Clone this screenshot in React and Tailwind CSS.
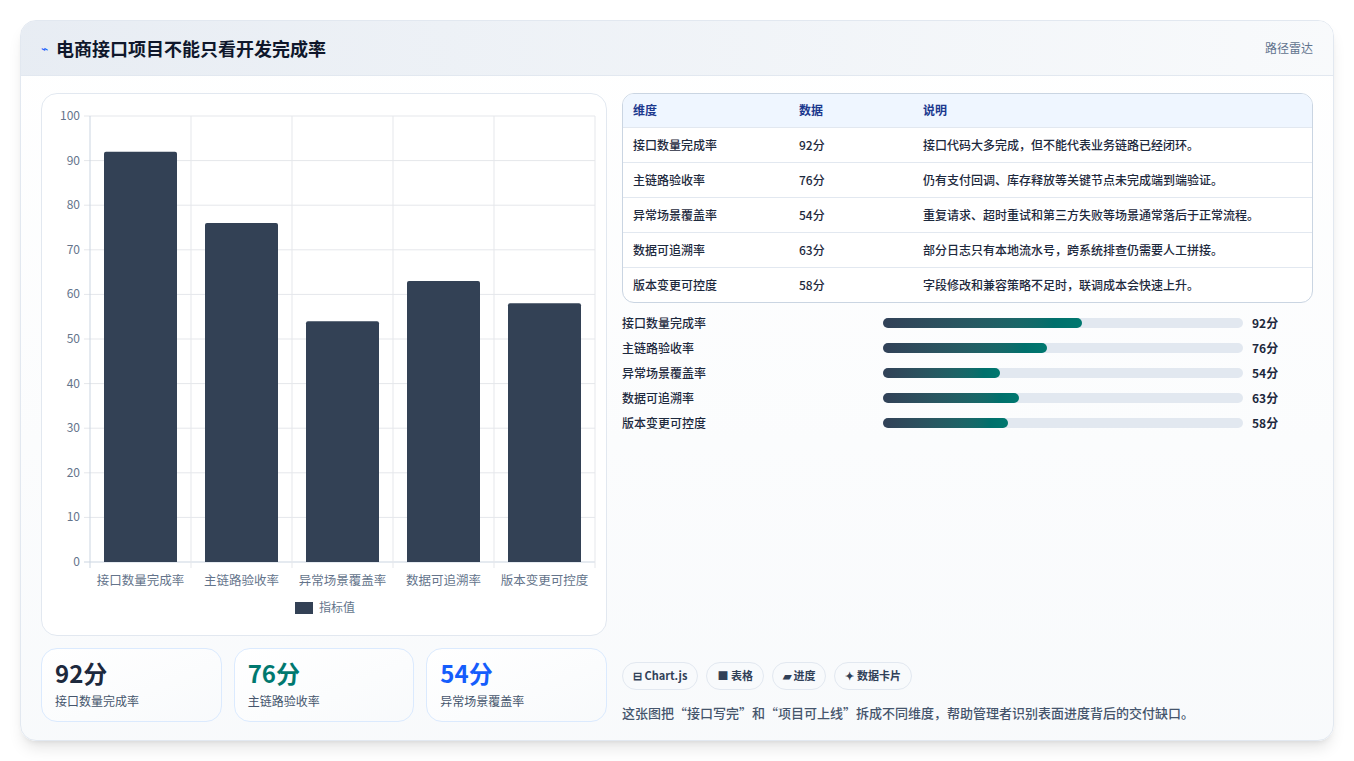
import React from 'react';

const rows = [
  { name: '接口数量完成率', v: 92, note: '接口代码大多完成，但不能代表业务链路已经闭环。' },
  { name: '主链路验收率', v: 76, note: '仍有支付回调、库存释放等关键节点未完成端到端验证。' },
  { name: '异常场景覆盖率', v: 54, note: '重复请求、超时重试和第三方失败等场景通常落后于正常流程。' },
  { name: '数据可追溯率', v: 63, note: '部分日志只有本地流水号，跨系统排查仍需要人工拼接。' },
  { name: '版本变更可控度', v: 58, note: '字段修改和兼容策略不足时，联调成本会快速上升。' },
];

function Chart() {
  const L = 48, R = 553, T = 22, B = 468;
  const step = (R - L) / 5;
  return (
    <svg width="566" height="543" className="block">
      {[0, 10, 20, 30, 40, 50, 60, 70, 80, 90, 100].map((t) => {
        const y = B - (t / 100) * (B - T);
        return (
          <g key={t}>
            <line x1={L - 6} x2={R} y1={y} y2={y} stroke={t === 0 ? '#cbd5e1' : '#e5e7eb'} />
            <text x={L - 10} y={y + 4} textAnchor="end" fontSize="12" fill="#64748b">{t}</text>
          </g>
        );
      })}
      {[0, 1, 2, 3, 4, 5].map((i) => (
        <line key={i} x1={L + i * step} x2={L + i * step} y1={T} y2={B + 6} stroke={i === 0 ? '#cbd5e1' : '#e5e7eb'} />
      ))}
      {rows.map((r, i) => {
        const h = (r.v / 100) * (B - T);
        const x = L + i * step + 14;
        return (
          <g key={r.name}>
            <path d={`M${x} ${B} V${B - h + 2} Q${x} ${B - h} ${x + 2} ${B - h} H${x + 71} Q${x + 73} ${B - h} ${x + 73} ${B - h + 2} V${B} Z`} fill="#334155" />
            <text x={L + i * step + step / 2} y={B + 23} textAnchor="middle" fontSize="12.5" fill="#64748b">{r.name}</text>
          </g>
        );
      })}
      <rect x="253" y="508" width="18" height="12" fill="#334155" />
      <text x="277" y="518" fontSize="12" fill="#64748b">指标值</text>
    </svg>
  );
}

export default function App() {
  return (
    <div className="min-h-screen bg-white p-5" style={{ fontFamily: '"Noto Sans CJK SC", "Noto Sans", sans-serif' }}>
      <div className="rounded-2xl border border-slate-200 shadow-lg overflow-hidden bg-gradient-to-b from-white to-slate-50 h-[721px] flex flex-col">
        <div className="h-[55px] shrink-0 flex items-center justify-between px-5 bg-gradient-to-r from-slate-200/80 to-slate-50 border-b border-slate-200">
          <div className="flex items-center gap-2">
            <span className="text-blue-600 text-xs">⌁</span>
            <h1 className="text-[18px] font-bold text-slate-900">电商接口项目不能只看开发完成率</h1>
          </div>
          <span className="text-xs text-slate-500">路径雷达</span>
        </div>
        <div className="flex gap-[15px] px-5 pt-[17px] pb-5 flex-1">
          <div className="w-[566px] flex flex-col gap-3">
            <div className="rounded-2xl border border-slate-200 bg-white h-[543px]"><Chart /></div>
            <div className="grid grid-cols-3 gap-3">
              {[['92分', 'text-slate-800', rows[0].name], ['76分', 'text-teal-700', rows[1].name], ['54分', 'text-blue-600', rows[2].name]].map(([v, c, n]) => (
                <div key={n} className="rounded-2xl border border-blue-100 bg-gradient-to-br from-white to-slate-50 h-[74px] px-[13px] pt-2">
                  <div className={`text-[24px] font-bold leading-8 ${c}`}>{v}</div>
                  <div className="text-xs text-slate-600 mt-1">{n}</div>
                </div>
              ))}
            </div>
          </div>
          <div className="flex-1 flex flex-col">
            <div className="rounded-xl border border-slate-300 overflow-hidden bg-white">
              <table className="w-full text-xs text-left">
                <thead className="bg-blue-50 text-blue-900">
                  <tr className="h-[33px]">
                    <th className="pl-[10px] w-[176px] font-semibold">维度</th>
                    <th className="w-[124px] font-semibold">数据</th>
                    <th className="font-semibold">说明</th>
                  </tr>
                </thead>
                <tbody className="text-slate-800 font-medium">
                  {rows.map((r) => (
                    <tr key={r.name} className="h-[35px] border-t border-slate-200">
                      <td className="pl-[10px]">{r.name}</td>
                      <td>{r.v}分</td>
                      <td>{r.note}</td>
                    </tr>
                  ))}
                </tbody>
              </table>
            </div>
            <div className="mt-[12px] flex flex-col gap-[9px]">
              {rows.map((r) => (
                <div key={r.name} className="flex items-center h-4 text-xs">
                  <span className="w-[261px] text-slate-800 font-medium">{r.name}</span>
                  <div className="w-[360px] h-[10px] rounded-full bg-slate-200">
                    <div className="h-full rounded-full bg-gradient-to-r from-slate-700 to-teal-700" style={{ width: `${r.v * 0.6}%` }} />
                  </div>
                  <span className="ml-[9px] font-bold text-slate-800">{r.v}分</span>
                </div>
              ))}
            </div>
            <div className="mt-auto">
              <div className="flex gap-2 text-[11px] font-semibold text-slate-700">
                <span className="rounded-full border border-slate-200 bg-slate-50 px-[10px] h-[28px] flex items-center">⊟ Chart.js</span>
                <span className="rounded-full border border-slate-200 bg-slate-50 px-[10px] h-[28px] flex items-center">■ 表格</span>
                <span className="rounded-full border border-slate-200 bg-slate-50 px-[10px] h-[28px] flex items-center">▰ 进度</span>
                <span className="rounded-full border border-slate-200 bg-slate-50 px-[10px] h-[28px] flex items-center">✦ 数据卡片</span>
              </div>
              <p className="mt-[13px] text-[13px] text-slate-600 font-medium">这张图把“接口写完”和“项目可上线”拆成不同维度，帮助管理者识别表面进度背后的交付缺口。</p>
            </div>
          </div>
        </div>
      </div>
    </div>
  );
}
